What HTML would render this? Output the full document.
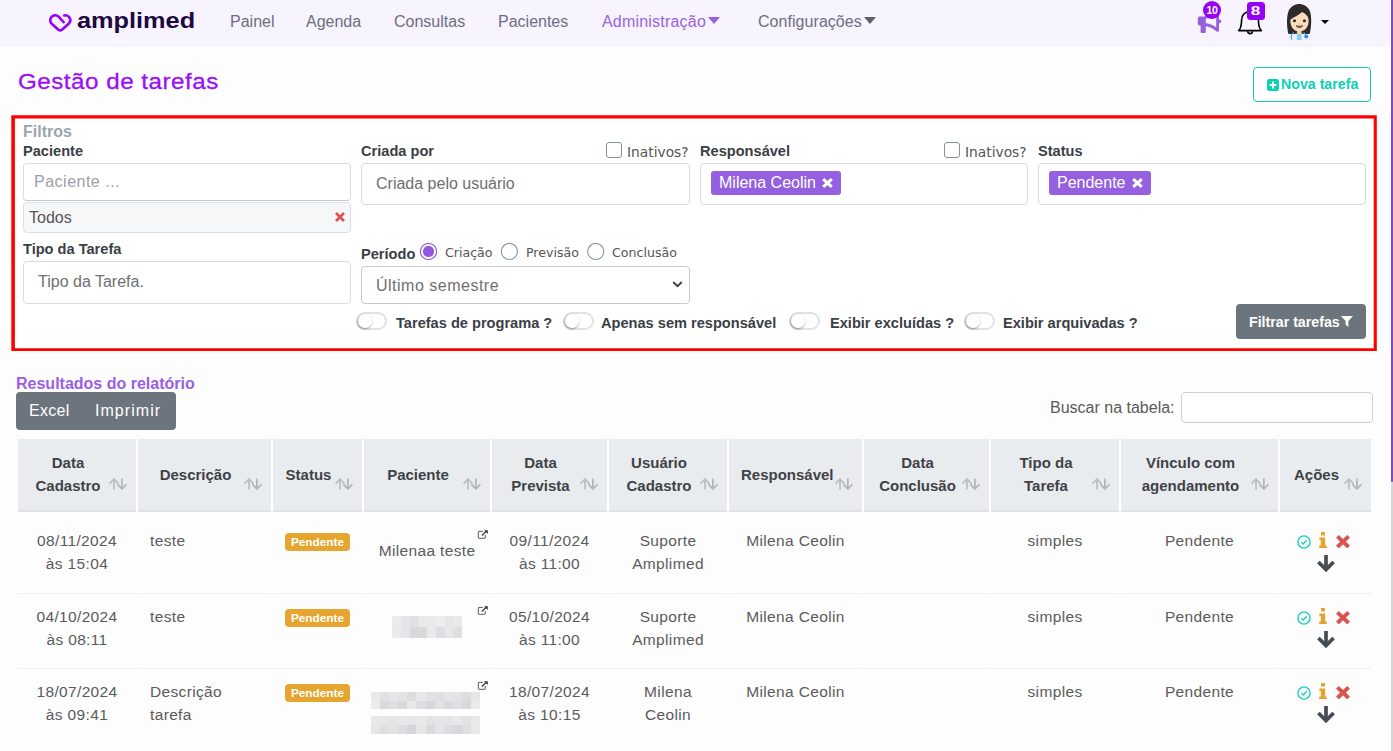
<!DOCTYPE html>
<html lang="pt-BR">
<head>
<meta charset="utf-8">
<title>Gestão de tarefas - Amplimed</title>
<style>
*{box-sizing:border-box}
html,body{margin:0;padding:0}
body{width:1393px;height:751px;overflow:hidden;position:relative;background:#fdfdfd;font-family:"Liberation Sans",sans-serif;font-size:16px;color:#555;}
.abs{position:absolute}
/* scrollbar */
#sb-track{position:absolute;left:1391px;top:0;width:2px;height:751px;background:#d6d6d6}
#sb-thumb{position:absolute;left:1391px;top:0;width:2px;height:482px;background:#7d4cc4;border-radius:0 0 1px 1px}
#sb-gap{position:absolute;left:1390px;top:0;width:1px;height:751px;background:#fff}
/* nav */
#nav{position:absolute;left:0;top:0;width:1390px;height:47px;background:#f7f3ff}
#nav a{position:absolute;top:12px;line-height:20px;font-size:16px;color:#6e6e80;text-decoration:none;white-space:nowrap}
#nav a.act{color:#9a62e0}
.caret{display:inline-block;width:0;height:0;border-left:6px solid transparent;border-right:6px solid transparent;border-top:7px solid currentColor;vertical-align:2.6px;margin-left:2.5px}
#logo-text{position:absolute;left:76.5px;top:6px;font-weight:700;font-size:22.5px;line-height:30px;color:#20093f;transform-origin:0 50%;transform:scaleX(1.125)}
h1{position:absolute;left:18.1px;top:66.5px;margin:0;font-weight:400;font-size:22px;line-height:30px;letter-spacing:.45px;transform-origin:0 50%;transform:scaleX(1.1);-webkit-text-stroke:.3px #9a10f5;color:#9a10f5;white-space:nowrap}
#nova{position:absolute;left:1253px;top:67px;width:118px;height:35px;border:1px solid #0dd0b5;border-radius:4px;background:#fff;color:#0dd0b5;font-weight:700;font-size:14.2px;line-height:33px;white-space:nowrap;padding-left:13px}
/* filter box */
#redbox{position:absolute;left:12px;top:116px;width:1365px;height:235px;background:#fff}
#redline{position:absolute;left:0;top:100px}
.lbl{position:absolute;font-weight:700;font-size:14.6px;line-height:18px;color:#3a4046;white-space:nowrap}
.inp{position:absolute;border:1px solid #dcdcdc;border-radius:4px;background:#fff;color:#6f6f6f;font-size:16px;white-space:nowrap}
.chk{position:absolute;width:16px;height:16px;border:1px solid #84919a;border-radius:3px;background:#fff}
.inat{position:absolute;font-family:"DejaVu Sans","Liberation Sans",sans-serif;font-size:13.8px;line-height:16px;color:#555;white-space:nowrap}
.tag{position:absolute;height:24px;border-radius:3px;background:#9560e0;color:#fff;font-size:16px;line-height:24px;padding-left:8px;white-space:nowrap}
.tog{position:absolute;width:31px;height:18px;border:2px solid #e2e2e2;border-radius:9px;background:#fff}
.tog i{position:absolute;left:0;top:0;width:14px;height:14px;border-radius:50%;background:#fff;box-shadow:-.5px 1px 2.5px rgba(0,0,0,.42)}
.toglbl{position:absolute;font-weight:700;font-size:14.6px;line-height:18px;color:#3a4046;white-space:nowrap}
.radio{position:absolute;width:17px;height:17px;border:1px solid #84919a;border-radius:50%;background:#fff}
.radio.on{width:17px;height:17px;border:1.5px solid #8a4be0}
.radio.on:after{content:"";position:absolute;left:1.5px;top:1.5px;width:11px;height:11px;border-radius:50%;background:#8a4be0}
.rlbl{position:absolute;font-family:"DejaVu Sans","Liberation Sans",sans-serif;font-size:12.6px;line-height:16px;color:#555;white-space:nowrap}
#filtrar{position:absolute;left:1236px;top:304px;width:130px;height:35px;border-radius:4px;background:#6c757d;color:#fff;font-weight:700;font-size:14.2px;line-height:36px;padding-left:13px;white-space:nowrap}
/* results */
#res-title{position:absolute;left:16px;top:374px;font-weight:700;font-size:16px;line-height:20px;color:#9a5fe2;white-space:nowrap}
#btns{position:absolute;left:16px;top:392px;width:160px;height:38px;border-radius:4px;background:#6c757d;color:#fff;font-size:16px;line-height:38px}
#btns span{position:absolute;top:0}
#search-lbl{position:absolute;left:1050px;top:397.6px;font-size:16px;line-height:20px;color:#5a5a5a;white-space:nowrap}
#search{position:absolute;left:1181px;top:392px;width:192px;height:31px;border:1px solid #cfcfcf;border-radius:4px;background:#fff}
/* table */
table{position:absolute;left:16px;top:437px;width:1357px;border-collapse:separate;border-spacing:2px;table-layout:fixed;font-size:15.5px;letter-spacing:.35px;line-height:23px;color:#5b5b5b}
th{background:#e9ecef;border-bottom:2px solid #dde1e6;height:73px;padding:0 30px 0 12px;font-weight:700;font-size:15px;letter-spacing:0;line-height:22.8px;color:#3f4247;text-align:center;vertical-align:middle;position:relative}
td{padding:10.5px 0 0 0;vertical-align:top;text-align:center;border-top:1px solid #efefef;position:relative}
td.l{text-align:left;padding-left:12px}
tr.r1 td{border-top-color:transparent;padding-top:13.5px}
td.pc{padding-top:21px}
tr.r1 td.pc{padding-top:24px}
.ext{position:absolute;left:113px;top:12px;width:11px;height:9px}
.ic{position:absolute}
tr.r1 .ext,tr.r1 .ic,tr.r1 .badge{margin-top:3px}
.h1l{position:relative;top:1px}
.mos i{position:absolute;display:block}
.sort{position:absolute;right:9px;bottom:20.5px;width:18px;height:12px}
.badge{position:absolute;left:12px;top:15px;width:65px;height:18px;border-radius:4px;background:#e5a52e;color:#fff;font-weight:700;font-size:11.8px;letter-spacing:0;line-height:18px;text-align:center}
.mos{position:absolute;left:0;top:0}
</style>
</head>
<body>
<div id="nav">
<svg class="abs" style="left:44px;top:8px" width="40" height="30" viewBox="44 8 40 30"><path d="M64.4 23 L58.6 16.6 C56.4 14.6 52.6 14.9 51 17.6 C49.7 19.9 50.3 22.4 52 24 L58.4 29.7 Q60.2 31 62 29.7 L68.4 24 C70.4 22 70.7 19.2 69.2 17.2 C67.7 15.2 65.2 14.9 63.2 15.9" fill="none" stroke="#9600ff" stroke-width="2.6" stroke-linejoin="round"/></svg>
<div id="logo-text">amplimed</div>
<a style="left:230px">Painel</a>
<a style="left:306px">Agenda</a>
<a style="left:394px">Consultas</a>
<a style="left:498px">Pacientes</a>
<a class="act" style="left:602px;letter-spacing:.2px">Administração<span class="caret"></span></a>
<a style="left:758px;letter-spacing:.05px">Configurações<span class="caret" style="color:#5b5f6c"></span></a>
<!-- megaphone -->
<svg class="abs" style="left:1196px;top:14px" width="26" height="21" viewBox="1196 14 26 21">
<path d="M1199.8 16.4 h6 v9.2 h-6 a2 2 0 0 1 -2 -2 v-5.2 a2 2 0 0 1 2 -2 z" fill="#9560dd"/>
<rect x="1200.6" y="24" width="5.2" height="9" rx="1" fill="#9560dd"/>
<path d="M1205 17.3 L1217.6 14.8 L1217.6 30.4 C1214 27.2 1210 25.1 1205 24.5" fill="none" stroke="#9560dd" stroke-width="2.8" stroke-linejoin="round"/>
<circle cx="1219.3" cy="21.3" r="1.9" fill="#9560dd"/>
</svg>
<div class="abs" style="left:1203px;top:1px;width:18px;height:18px;border-radius:50%;background:#9600f5;color:#fff;font-weight:700;font-size:10.5px;line-height:18px;text-align:center;letter-spacing:-.3px">10</div>
<!-- bell -->
<svg class="abs" style="left:1236px;top:8px" width="28" height="28" viewBox="1236 8 28 28">
<path d="M1238.6 30.6 C1241.6 28 1241.4 24 1241.6 20 C1241.8 15 1245 11.6 1250 11.6 C1255 11.6 1258.2 15 1258.4 20 C1258.6 24 1258.4 28 1261.4 30.6 Z" fill="none" stroke="#000" stroke-width="1.6" stroke-linejoin="round"/>
<path d="M1247.6 31.2 a2.4 2.4 0 0 0 4.8 0" fill="none" stroke="#000" stroke-width="1.6"/>
</svg>
<div class="abs" style="left:1247px;top:2px;width:18px;height:18px;border-radius:3.5px;background:#9600f5;color:#fff;font-weight:700;font-size:13px;line-height:18px;text-align:center"><span style="display:inline-block;transform:scaleX(1.32)">8</span></div>
<!-- avatar -->
<svg class="abs" style="left:1284px;top:2px" width="32" height="40" viewBox="1284 2 32 40">
<path d="M1288.4 34 C1286.4 26 1286.6 16 1288.6 11 C1290.6 6 1295 3.9 1299.2 3.9 C1303.4 3.9 1307.8 6 1309.8 11 C1311.8 16 1311.6 26 1309.6 34 Z" fill="#2f2b2a"/>
<path d="M1287.2 40 C1288 36 1291 34 1299.2 33.6 C1307.4 34 1310.4 36 1311.2 40 Z" fill="#f0f0f2"/>
<rect x="1297" y="29" width="4.5" height="6" fill="#f5d3a6"/>
<rect x="1296.9" y="34" width="4.6" height="6" fill="#7fd0f7"/>
<path d="M1290.3 20 C1290.3 14 1295 12.2 1302 12 C1306 14 1308.6 16 1308.6 21 C1308.6 28 1304.4 31.4 1299.4 31.4 C1294.4 31.4 1290.3 28 1290.3 20 Z" fill="#fadcbc"/>
<path d="M1290 20 C1290 14 1294 11 1302.5 11.6 C1299 15.4 1294 17 1290 20 Z" fill="#2f2b2a"/>
<circle cx="1294.5" cy="20.7" r="1.55" fill="#2f2b2a"/><circle cx="1304.4" cy="20.7" r="1.55" fill="#2f2b2a"/>
<path d="M1296 25.8 Q1299.3 29.4 1302.8 25.8 Q1299.3 26.8 1296 25.8 Z" fill="#4a4543" stroke="#4a4543" stroke-width=".8"/>
<ellipse cx="1299.3" cy="23.9" rx="1.1" ry=".7" fill="#eebfa8"/>
<path d="M1294 32.5 C1291 34 1290.5 37 1292 39.6 M1303.6 32.5 C1305.6 33.5 1306.2 35 1306.2 36" fill="none" stroke="#3a9df0" stroke-width="1.1"/>
<circle cx="1306.2" cy="36.6" r="2" fill="#2b8cf0"/>
</svg>
<div class="abs" style="left:1321px;top:20px;width:0;height:0;border-left:4px solid transparent;border-right:4px solid transparent;border-top:4px solid #000"></div>
</div>
<div id="sb-gap"></div><div id="sb-track"></div><div id="sb-thumb"></div>
<h1>Gestão de tarefas</h1>
<div id="nova"><svg style="position:absolute;left:12.5px;top:10.5px" width="12" height="12" viewBox="0 0 12 12"><rect width="12" height="12" rx="2.2" fill="#0dd0b5"/><path d="M6 2.6v6.8M2.6 6h6.8" stroke="#fff" stroke-width="2"/></svg><span style="margin-left:14px">Nova tarefa</span></div>
<div id="redbox"></div>
<svg id="redline" width="1393" height="260" viewBox="0 100 1393 260"><path fill-rule="evenodd" fill="#fe0000" d="M11.3 115.3H1376.8V351.1H11.3ZM14.9 118.6V348.2H1373.7V118.6Z"/></svg>
<div id="filters">
<div class="abs" style="left:23px;top:122px;font-weight:700;font-size:16px;line-height:19px;color:#9ba5af">Filtros</div>
<div class="lbl" style="left:23px;top:142px">Paciente</div>
<div class="inp" style="left:23px;top:163px;width:328px;height:37.5px;line-height:35px;border-bottom-color:#c8c8c8;padding-left:10px;color:#9aa0a6;letter-spacing:.5px">Paciente ...</div>
<div class="inp" style="left:23px;top:201.5px;width:328px;height:31px;line-height:29px;padding-left:5px;background:#f6f7f9;border-color:#dddfe2;color:#555">Todos</div>
<svg class="abs" style="left:334px;top:211px" width="12" height="12" viewBox="0 0 12 12"><path d="M2 2L10 10M10 2L2 10" stroke="#d9534f" stroke-width="2.6"/></svg>
<div class="lbl" style="left:23px;top:240px">Tipo da Tarefa</div>
<div class="inp" style="left:23px;top:261px;width:328px;height:42.6px;line-height:40.6px;padding-left:14px">Tipo da Tarefa.</div>

<div class="lbl" style="left:361px;top:142px">Criada por</div>
<div class="chk" style="left:605.5px;top:142px"></div>
<div class="inat" style="left:627px;top:143.5px">Inativos?</div>
<div class="inp" style="left:361px;top:163px;width:329px;height:41.5px;line-height:40px;padding-left:14px">Criada pelo usuário</div>

<div class="lbl" style="left:700px;top:142px">Responsável</div>
<div class="chk" style="left:943.5px;top:142px"></div>
<div class="inat" style="left:965px;top:143.5px">Inativos?</div>
<div class="inp" style="left:700px;top:163px;width:328px;height:41.5px"></div>
<div class="tag" style="left:711px;top:171px;width:130px">Milena Ceolin <svg style="position:absolute;right:8px;top:7.3px" width="11" height="10" viewBox="0 0 11 10"><path d="M1.2 1.1L9.8 8.9M9.8 1.1L1.2 8.9" stroke="#fff" stroke-width="3"/></svg></div>

<div class="lbl" style="left:1038px;top:142px">Status</div>
<div class="inp" style="left:1038px;top:163px;width:328px;height:41.5px"></div>
<div class="tag" style="left:1049px;top:171px;width:102px">Pendente <svg style="position:absolute;right:8px;top:7.3px" width="11" height="10" viewBox="0 0 11 10"><path d="M1.2 1.1L9.8 8.9M9.8 1.1L1.2 8.9" stroke="#fff" stroke-width="3"/></svg></div>

<div class="lbl" style="left:361px;top:245px">Período</div>
<svg class="abs" style="left:419px;top:242px" width="19" height="19" viewBox="0 0 19 19"><circle cx="9.5" cy="9.45" r="8.1" fill="#fff" stroke="#9058e0" stroke-width="1.1"/><circle cx="9.5" cy="9.45" r="5.6" fill="#9058e0"/></svg><div class="rlbl" style="left:445px;top:245px">Criação</div>
<svg class="abs" style="left:500px;top:242px" width="19" height="19" viewBox="0 0 19 19"><circle cx="9.4" cy="9.45" r="8.05" fill="#fff" stroke="#84959e" stroke-width="1.1"/></svg><div class="rlbl" style="left:526px;top:245px">Previsão</div>
<svg class="abs" style="left:586px;top:242px" width="19" height="19" viewBox="0 0 19 19"><circle cx="9.75" cy="9.45" r="8.05" fill="#fff" stroke="#84959e" stroke-width="1.1"/></svg><div class="rlbl" style="left:612px;top:245px">Conclusão</div>
<div class="inp" style="left:361px;top:266px;width:329px;height:37.5px;line-height:37.5px;padding-left:14px;border-color:#c9c9c9;letter-spacing:.5px">Último semestre<svg style="position:absolute;right:6px;top:13px" width="11" height="9" viewBox="0 0 11 9"><path d="M1.2 2L5.5 6.2L9.8 2" fill="none" stroke="#3c3c3c" stroke-width="1.8"/></svg></div>

<div class="tog" style="left:355.5px;top:312px"><i></i></div><div class="toglbl" style="left:396px;top:314px">Tarefas de programa ?</div>
<div class="tog" style="left:562.5px;top:312px"><i></i></div><div class="toglbl" style="left:601px;top:314px">Apenas sem responsável</div>
<div class="tog" style="left:789px;top:312px"><i></i></div><div class="toglbl" style="left:830px;top:314px">Exibir excluídas ?</div>
<div class="tog" style="left:963.5px;top:312px"><i></i></div><div class="toglbl" style="left:1003px;top:314px">Exibir arquivadas ?</div>
<div id="filtrar">Filtrar tarefas<svg style="position:absolute;left:105.4px;top:12px" width="12" height="11" viewBox="0 0 12 11"><path d="M0 0H12L7.4 4.9V11L4.6 8.7V4.9Z" fill="#fff"/></svg></div>
</div>
<div id="res-title">Resultados do relatório</div>
<div id="btns"><span style="left:13px;letter-spacing:.3px">Excel</span><span style="left:79px;letter-spacing:1.05px">Imprimir</span></div>
<div id="search-lbl">Buscar na tabela:</div>
<div id="search"></div>
<table><thead><tr><th style="width:118px">Data<br>Cadastro<svg class="sort" viewBox="0 0 18 12"><path d="M5 11.4V1.2M.5 5.6L5 1.1L9.5 5.6" fill="none" stroke="#babec2" stroke-width="1.7"/><path d="M12.9 .6V10.8M8.4 6.4L12.9 10.9L17.4 6.4" fill="none" stroke="#b1b5b9" stroke-width="1.7"/></svg></th><th style="width:133px"><span class="h1l">Descrição</span><svg class="sort" viewBox="0 0 18 12"><path d="M5 11.4V1.2M.5 5.6L5 1.1L9.5 5.6" fill="none" stroke="#babec2" stroke-width="1.7"/><path d="M12.9 .6V10.8M8.4 6.4L12.9 10.9L17.4 6.4" fill="none" stroke="#b1b5b9" stroke-width="1.7"/></svg></th><th style="width:89px"><span class="h1l">Status</span><svg class="sort" viewBox="0 0 18 12"><path d="M5 11.4V1.2M.5 5.6L5 1.1L9.5 5.6" fill="none" stroke="#babec2" stroke-width="1.7"/><path d="M12.9 .6V10.8M8.4 6.4L12.9 10.9L17.4 6.4" fill="none" stroke="#b1b5b9" stroke-width="1.7"/></svg></th><th style="width:126px"><span class="h1l">Paciente</span><svg class="sort" viewBox="0 0 18 12"><path d="M5 11.4V1.2M.5 5.6L5 1.1L9.5 5.6" fill="none" stroke="#babec2" stroke-width="1.7"/><path d="M12.9 .6V10.8M8.4 6.4L12.9 10.9L17.4 6.4" fill="none" stroke="#b1b5b9" stroke-width="1.7"/></svg></th><th style="width:115px">Data<br>Prevista<svg class="sort" viewBox="0 0 18 12"><path d="M5 11.4V1.2M.5 5.6L5 1.1L9.5 5.6" fill="none" stroke="#babec2" stroke-width="1.7"/><path d="M12.9 .6V10.8M8.4 6.4L12.9 10.9L17.4 6.4" fill="none" stroke="#b1b5b9" stroke-width="1.7"/></svg></th><th style="width:118px">Usuário<br>Cadastro<svg class="sort" viewBox="0 0 18 12"><path d="M5 11.4V1.2M.5 5.6L5 1.1L9.5 5.6" fill="none" stroke="#babec2" stroke-width="1.7"/><path d="M12.9 .6V10.8M8.4 6.4L12.9 10.9L17.4 6.4" fill="none" stroke="#b1b5b9" stroke-width="1.7"/></svg></th><th style="width:133px"><span class="h1l">Responsável</span><svg class="sort" viewBox="0 0 18 12"><path d="M5 11.4V1.2M.5 5.6L5 1.1L9.5 5.6" fill="none" stroke="#babec2" stroke-width="1.7"/><path d="M12.9 .6V10.8M8.4 6.4L12.9 10.9L17.4 6.4" fill="none" stroke="#b1b5b9" stroke-width="1.7"/></svg></th><th style="width:125px">Data<br>Conclusão<svg class="sort" viewBox="0 0 18 12"><path d="M5 11.4V1.2M.5 5.6L5 1.1L9.5 5.6" fill="none" stroke="#babec2" stroke-width="1.7"/><path d="M12.9 .6V10.8M8.4 6.4L12.9 10.9L17.4 6.4" fill="none" stroke="#b1b5b9" stroke-width="1.7"/></svg></th><th style="width:128px">Tipo da<br>Tarefa<svg class="sort" viewBox="0 0 18 12"><path d="M5 11.4V1.2M.5 5.6L5 1.1L9.5 5.6" fill="none" stroke="#babec2" stroke-width="1.7"/><path d="M12.9 .6V10.8M8.4 6.4L12.9 10.9L17.4 6.4" fill="none" stroke="#b1b5b9" stroke-width="1.7"/></svg></th><th style="width:157px">Vínculo com<br>agendamento<svg class="sort" viewBox="0 0 18 12"><path d="M5 11.4V1.2M.5 5.6L5 1.1L9.5 5.6" fill="none" stroke="#babec2" stroke-width="1.7"/><path d="M12.9 .6V10.8M8.4 6.4L12.9 10.9L17.4 6.4" fill="none" stroke="#b1b5b9" stroke-width="1.7"/></svg></th><th style="width:91px"><span class="h1l">Ações</span><svg class="sort" viewBox="0 0 18 12"><path d="M5 11.4V1.2M.5 5.6L5 1.1L9.5 5.6" fill="none" stroke="#babec2" stroke-width="1.7"/><path d="M12.9 .6V10.8M8.4 6.4L12.9 10.9L17.4 6.4" fill="none" stroke="#b1b5b9" stroke-width="1.7"/></svg></th></tr></thead>
<tbody>
<tr class="r1" style="height:77px"><td>08/11/2024<br>às 15:04</td><td class="l">teste</td><td class="l"><span class="badge">Pendente</span></td><td class="pc"><span class="pn">Milenaa teste</span><svg class="ext" viewBox="0 0 11 9"><path d="M8.3 5V7.7Q8.3 8.3 7.7 8.3H1.9Q1.3 8.3 1.3 7.7V2Q1.3 1.4 1.9 1.4H5.8" fill="none" stroke="#4b4f54" stroke-width=".95"/><path d="M4.9 5.5L9.3 1.3" fill="none" stroke="#33373c" stroke-width="1.25"/><path d="M7 .2H10.8V3.9Z" fill="#33373c"/></svg></td><td>09/11/2024<br>às 11:00</td><td>Suporte<br>Amplimed</td><td>Milena Ceolin</td><td></td><td>simples</td><td>Pendente</td><td class="ac"><svg class="ic" style="left:16.6px;top:17px" width="14" height="14" viewBox="0 0 14 14"><circle cx="7" cy="7" r="6.1" fill="none" stroke="#1ccdc2" stroke-width="1.4"/><path d="M4.3 7.2L6.2 9L9.8 5.2" fill="none" stroke="#1ccdc2" stroke-width="1.3"/></svg>
<svg class="ic" style="left:38.5px;top:14px" width="8" height="16" viewBox="0 0 8 16"><path d="M2 0H6V3.6H2ZM.4 5.6H6.2V13.6H7.8V16H.2V13.6H1.8V8H.4Z" fill="#e5a32e"/></svg>
<svg class="ic" style="left:55.8px;top:17px" width="14" height="13.4" viewBox="0 0 14 13.4"><path d="M1.4 1.4L12.6 12M12.6 1.4L1.4 12" stroke="#d9534f" stroke-width="3.9"/></svg>
<svg class="ic" style="left:36.6px;top:37px" width="18" height="17.4" viewBox="0 0 18 17.4"><path d="M9 0V13.6" fill="none" stroke="#464c52" stroke-width="3.7"/><path d="M1.4 7L9 14.6L16.6 7" fill="none" stroke="#464c52" stroke-width="3.7" stroke-linejoin="miter"/></svg></td></tr>
<tr style="height:73px"><td>04/10/2024<br>às 08:11</td><td class="l">teste</td><td class="l"><span class="badge">Pendente</span></td><td class="pc"><span class="mos"><i style="left:28.0px;top:22.0px;width:9.1px;height:11.3px;background:#ebebeb"></i><i style="left:36.8px;top:22.0px;width:9.1px;height:11.3px;background:#e6e6e8"></i><i style="left:45.5px;top:22.0px;width:9.1px;height:11.3px;background:#dfe0e3"></i><i style="left:54.2px;top:22.0px;width:9.1px;height:11.3px;background:#e9e9ea"></i><i style="left:63.0px;top:22.0px;width:9.1px;height:11.3px;background:#e9ebeb"></i><i style="left:71.8px;top:22.0px;width:9.1px;height:11.3px;background:#ececee"></i><i style="left:80.5px;top:22.0px;width:9.1px;height:11.3px;background:#e6e6e6"></i><i style="left:89.2px;top:22.0px;width:9.1px;height:11.3px;background:#e8e9ea"></i><i style="left:28.0px;top:33.0px;width:9.1px;height:11.3px;background:#eaeaea"></i><i style="left:36.8px;top:33.0px;width:9.1px;height:11.3px;background:#e3e5e8"></i><i style="left:45.5px;top:33.0px;width:9.1px;height:11.3px;background:#d9d9db"></i><i style="left:54.2px;top:33.0px;width:9.1px;height:11.3px;background:#d9dadb"></i><i style="left:63.0px;top:33.0px;width:9.1px;height:11.3px;background:#e9eaea"></i><i style="left:71.8px;top:33.0px;width:9.1px;height:11.3px;background:#dce0e4"></i><i style="left:80.5px;top:33.0px;width:9.1px;height:11.3px;background:#e9e7e6"></i><i style="left:89.2px;top:33.0px;width:9.1px;height:11.3px;background:#dcdfe3"></i></span><svg class="ext" viewBox="0 0 11 9"><path d="M8.3 5V7.7Q8.3 8.3 7.7 8.3H1.9Q1.3 8.3 1.3 7.7V2Q1.3 1.4 1.9 1.4H5.8" fill="none" stroke="#4b4f54" stroke-width=".95"/><path d="M4.9 5.5L9.3 1.3" fill="none" stroke="#33373c" stroke-width="1.25"/><path d="M7 .2H10.8V3.9Z" fill="#33373c"/></svg></td><td>05/10/2024<br>às 11:00</td><td>Suporte<br>Amplimed</td><td>Milena Ceolin</td><td></td><td>simples</td><td>Pendente</td><td class="ac"><svg class="ic" style="left:16.6px;top:17px" width="14" height="14" viewBox="0 0 14 14"><circle cx="7" cy="7" r="6.1" fill="none" stroke="#1ccdc2" stroke-width="1.4"/><path d="M4.3 7.2L6.2 9L9.8 5.2" fill="none" stroke="#1ccdc2" stroke-width="1.3"/></svg>
<svg class="ic" style="left:38.5px;top:14px" width="8" height="16" viewBox="0 0 8 16"><path d="M2 0H6V3.6H2ZM.4 5.6H6.2V13.6H7.8V16H.2V13.6H1.8V8H.4Z" fill="#e5a32e"/></svg>
<svg class="ic" style="left:55.8px;top:17px" width="14" height="13.4" viewBox="0 0 14 13.4"><path d="M1.4 1.4L12.6 12M12.6 1.4L1.4 12" stroke="#d9534f" stroke-width="3.9"/></svg>
<svg class="ic" style="left:36.6px;top:37px" width="18" height="17.4" viewBox="0 0 18 17.4"><path d="M9 0V13.6" fill="none" stroke="#464c52" stroke-width="3.7"/><path d="M1.4 7L9 14.6L16.6 7" fill="none" stroke="#464c52" stroke-width="3.7" stroke-linejoin="miter"/></svg></td></tr>
<tr style="height:84px"><td>18/07/2024<br>às 09:41</td><td class="l">Descrição<br>tarefa</td><td class="l"><span class="badge">Pendente</span></td><td class="pc"><span class="mos"><i style="left:7.0px;top:23.0px;width:9.4px;height:8.8px;background:#e9e9ea"></i><i style="left:16.1px;top:23.0px;width:9.4px;height:8.8px;background:#e1e2e4"></i><i style="left:25.2px;top:23.0px;width:9.4px;height:8.8px;background:#e6e6e8"></i><i style="left:34.2px;top:23.0px;width:9.4px;height:8.8px;background:#e2e3e5"></i><i style="left:43.3px;top:23.0px;width:9.4px;height:8.8px;background:#dcdde0"></i><i style="left:52.4px;top:23.0px;width:9.4px;height:8.8px;background:#e8e8ea"></i><i style="left:61.5px;top:23.0px;width:9.4px;height:8.8px;background:#e0e1e3"></i><i style="left:70.6px;top:23.0px;width:9.4px;height:8.8px;background:#dfe0e2"></i><i style="left:79.7px;top:23.0px;width:9.4px;height:8.8px;background:#e5e5e7"></i><i style="left:88.8px;top:23.0px;width:9.4px;height:8.8px;background:#e2e3e6"></i><i style="left:97.8px;top:23.0px;width:9.4px;height:8.8px;background:#dcdde0"></i><i style="left:106.9px;top:23.0px;width:9.4px;height:8.8px;background:#e6e6e8"></i><i style="left:7.0px;top:31.5px;width:9.4px;height:8.8px;background:#ececed"></i><i style="left:16.1px;top:31.5px;width:9.4px;height:8.8px;background:#d9dadd"></i><i style="left:25.2px;top:31.5px;width:9.4px;height:8.8px;background:#dfe0e2"></i><i style="left:34.2px;top:31.5px;width:9.4px;height:8.8px;background:#d6d8db"></i><i style="left:43.3px;top:31.5px;width:9.4px;height:8.8px;background:#e9e9ea"></i><i style="left:52.4px;top:31.5px;width:9.4px;height:8.8px;background:#dcdde0"></i><i style="left:61.5px;top:31.5px;width:9.4px;height:8.8px;background:#d5d7da"></i><i style="left:70.6px;top:31.5px;width:9.4px;height:8.8px;background:#e2e3e5"></i><i style="left:79.7px;top:31.5px;width:9.4px;height:8.8px;background:#d9dadd"></i><i style="left:88.8px;top:31.5px;width:9.4px;height:8.8px;background:#dfe0e2"></i><i style="left:97.8px;top:31.5px;width:9.4px;height:8.8px;background:#d6d8db"></i><i style="left:106.9px;top:31.5px;width:9.4px;height:8.8px;background:#eaeaeb"></i></span><span class="mos"><i style="left:7.0px;top:47.0px;width:9.4px;height:9.3px;background:#e9e9ea"></i><i style="left:16.1px;top:47.0px;width:9.4px;height:9.3px;background:#e6e6e8"></i><i style="left:25.2px;top:47.0px;width:9.4px;height:9.3px;background:#e3e4e6"></i><i style="left:34.2px;top:47.0px;width:9.4px;height:9.3px;background:#e8e8ea"></i><i style="left:43.3px;top:47.0px;width:9.4px;height:9.3px;background:#e5e6e8"></i><i style="left:52.4px;top:47.0px;width:9.4px;height:9.3px;background:#e9e9ea"></i><i style="left:61.5px;top:47.0px;width:9.4px;height:9.3px;background:#e2e3e5"></i><i style="left:70.6px;top:47.0px;width:9.4px;height:9.3px;background:#e6e6e8"></i><i style="left:79.7px;top:47.0px;width:9.4px;height:9.3px;background:#e3e4e6"></i><i style="left:88.8px;top:47.0px;width:9.4px;height:9.3px;background:#e8e8ea"></i><i style="left:97.8px;top:47.0px;width:9.4px;height:9.3px;background:#e1e2e5"></i><i style="left:106.9px;top:47.0px;width:9.4px;height:9.3px;background:#e9e9ea"></i><i style="left:7.0px;top:56.0px;width:9.4px;height:9.3px;background:#e6e6e8"></i><i style="left:16.1px;top:56.0px;width:9.4px;height:9.3px;background:#dedfe2"></i><i style="left:25.2px;top:56.0px;width:9.4px;height:9.3px;background:#e1e2e4"></i><i style="left:34.2px;top:56.0px;width:9.4px;height:9.3px;background:#dcdde0"></i><i style="left:43.3px;top:56.0px;width:9.4px;height:9.3px;background:#d3d5d9"></i><i style="left:52.4px;top:56.0px;width:9.4px;height:9.3px;background:#e6e6e8"></i><i style="left:61.5px;top:56.0px;width:9.4px;height:9.3px;background:#d9dadd"></i><i style="left:70.6px;top:56.0px;width:9.4px;height:9.3px;background:#e3e4e6"></i><i style="left:79.7px;top:56.0px;width:9.4px;height:9.3px;background:#dcdde0"></i><i style="left:88.8px;top:56.0px;width:9.4px;height:9.3px;background:#d6d8db"></i><i style="left:97.8px;top:56.0px;width:9.4px;height:9.3px;background:#dedfe2"></i><i style="left:106.9px;top:56.0px;width:9.4px;height:9.3px;background:#e9e9ea"></i></span><svg class="ext" viewBox="0 0 11 9"><path d="M8.3 5V7.7Q8.3 8.3 7.7 8.3H1.9Q1.3 8.3 1.3 7.7V2Q1.3 1.4 1.9 1.4H5.8" fill="none" stroke="#4b4f54" stroke-width=".95"/><path d="M4.9 5.5L9.3 1.3" fill="none" stroke="#33373c" stroke-width="1.25"/><path d="M7 .2H10.8V3.9Z" fill="#33373c"/></svg></td><td>18/07/2024<br>às 10:15</td><td>Milena<br>Ceolin</td><td>Milena Ceolin</td><td></td><td>simples</td><td>Pendente</td><td class="ac"><svg class="ic" style="left:16.6px;top:17px" width="14" height="14" viewBox="0 0 14 14"><circle cx="7" cy="7" r="6.1" fill="none" stroke="#1ccdc2" stroke-width="1.4"/><path d="M4.3 7.2L6.2 9L9.8 5.2" fill="none" stroke="#1ccdc2" stroke-width="1.3"/></svg>
<svg class="ic" style="left:38.5px;top:14px" width="8" height="16" viewBox="0 0 8 16"><path d="M2 0H6V3.6H2ZM.4 5.6H6.2V13.6H7.8V16H.2V13.6H1.8V8H.4Z" fill="#e5a32e"/></svg>
<svg class="ic" style="left:55.8px;top:17px" width="14" height="13.4" viewBox="0 0 14 13.4"><path d="M1.4 1.4L12.6 12M12.6 1.4L1.4 12" stroke="#d9534f" stroke-width="3.9"/></svg>
<svg class="ic" style="left:36.6px;top:37px" width="18" height="17.4" viewBox="0 0 18 17.4"><path d="M9 0V13.6" fill="none" stroke="#464c52" stroke-width="3.7"/><path d="M1.4 7L9 14.6L16.6 7" fill="none" stroke="#464c52" stroke-width="3.7" stroke-linejoin="miter"/></svg></td></tr>
</tbody></table>
</body>
</html>
